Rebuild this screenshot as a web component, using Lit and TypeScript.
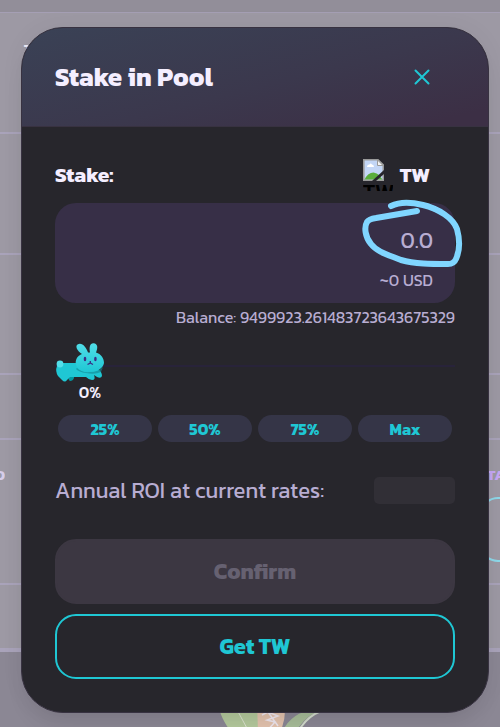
import { LitElement, html, css } from "lit";
import { customElement, state } from "lit/decorators.js";

@customElement("stake-backdrop")
class StakeBackdrop extends LitElement {
  static styles = css`
    :host {
      display: flex;
      flex-direction: column;
      background: #9d99a4;
      color: #d6cdea;
      font: 700 15px/16px Kanit, "Noto Sans", sans-serif;
    }
    .bar { flex: none; height: 12px; background: #928e99; border-bottom: 1px solid #a59fb4; }
    .row { flex: none; box-sizing: border-box; height: 121px; border-bottom: 2px solid #a9a3ba; }
    .first { padding: 28px 0 0 24px; color: #eeeaf4; }
    .third { height: 120px; }
    .short { height: 65px; }
    .panel { height: 145px; display: flex; justify-content: space-between; padding-top: 27px; }
    .left { width: 5px; direction: rtl; white-space: nowrap; overflow: hidden; }
    .right { width: 13px; white-space: nowrap; color: #c6a8f5; overflow: hidden; }
    .pill { width: 80px; height: 61px; margin: 14px 0 0 -7px; border: 2px solid #8ed9ea; border-radius: 18px; }
    .last { height: 67px; border-bottom-width: 4px; }
    .foot { flex: 1; background: #8b8794; padding-left: 218px; }
    .foot svg { display: block; margin-top: 30px; }
  `;
  render() {
    return html`
      <div class="bar"></div>
      <div class="row first">T</div>
      <div class="row"></div>
      <div class="row third"></div>
      <div class="row short"></div>
      <div class="row panel">
        <div class="left">ED</div>
        <div class="right">TAKE<div class="pill"></div></div>
      </div>
      <div class="row last"></div>
      <div class="foot">
        <svg width="110" height="46" viewBox="0 0 110 46" aria-hidden="true">
          <path d="M0 18C1 32 6 40 13 50H42V20Z" fill="#b4c99d" />
          <path d="M17 24L31 50" stroke="#dce3cf" />
          <path d="M39 20H66Q69 36 62 50H40Z" fill="#e3c3ae" />
          <path d="M44 33L50 30 60 34 49 38 57 40 48 50M50 30L60 44" fill="none" stroke="#eee6ee" stroke-width="1.500" />
          <path d="M104 28Q76 26 64 50H78Q86 34 104 28Z" fill="#a8bd99" />
          <path d="M103 29Q88 35 80 50" fill="none" stroke="#d3dccc" stroke-width="2" />
        </svg>
      </div>
    `;
  }
}

@customElement("bunny-slider")
class BunnySlider extends LitElement {
  static styles = css`
    :host { display: block; position: relative; box-sizing: border-box; height: 68px; padding-top: 1px; }
    .track { height: 2px; background: #28233a; margin-top: 25px; }
    .bunny { position: absolute; left: 0; top: 3px; }
    .range { position: absolute; inset: 0; width: 100%; margin: 0; opacity: 0; }
    .value {
      position: absolute;
      left: 0;
      top: 41px;
      width: 70px;
      text-align: center;
      color: #f4eeff;
      font-size: 16px;
      line-height: 24px;
      font-weight: 500;
    }
  `;
  render() {
    return html`
      <div class="track"></div>
      <svg class="bunny" width="50" height="41" viewBox="0 0 50 41" aria-hidden="true">
        <defs>
          <linearGradient id="head" x1="0" y1="0" x2="0" y2="30" gradientUnits="userSpaceOnUse">
            <stop stop-color="#53dee9" />
            <stop offset="1" stop-color="#1fc7d4" />
          </linearGradient>
        </defs>
        <path d="M13 33H19V36Q18 39 15 39 13 38 13 33Z" fill="#0098a1" />
        <path d="M36 27H43Q47 30 47 34 46 37 42 35L39 33Q41 38 37 38 34 38 31 35H15L12 38Q10 41 7 38L3 34Q0 29 2 24 4 21 8 21H36Z" fill="#1fc7d4" />
        <circle cx="5" cy="22" r="3.4" fill="#53dee9" />
        <path d="M22 26Q27 31 35 30 43 30 48 25L46 30Q40 33 31 31Q24 30 21 27Z" fill="#148b96" opacity=".65" />
        <path d="M27 12C22 9 20 4 22.500 2.500 27 0 31 5 33 10.500H35C34 5 35 1 38.5 1.2 43 1.500 43 6 41 10.500 46 12 49 16 49 21 48 27 42 29.500 35 29.500 27 29.500 21 27 20.700 21 20.500 16 24 13 27 12Z" fill="url(#head)" />
        <ellipse cx="30" cy="17" rx="1.3" ry="2.2" fill="#3b2d85" />
        <ellipse cx="40.4" cy="17" rx="1.3" ry="2.2" fill="#3b2d85" />
        <path d="M35.3 19V21L32.5 22.5M35.3 21L38 22.5" fill="none" stroke="#3b2d85" stroke-width="1.3" />
      </svg>
      <input class="range" type="range" min="0" max="100" value="0" aria-label="Stake percentage" />
      <div class="value">0%</div>
    `;
  }
}

@customElement("app-root")
class AppRoot extends LitElement {
  @state() private amount = "";

  static styles = css`
    :host {
      display: block;
      position: relative;
      min-height: 100vh;
      box-sizing: border-box;
      padding: 27px 11px 14px 21px;
      overflow: hidden;
      font-family: Kanit, "Noto Sans", sans-serif;
      font-variant-ligatures: none;
      color: #f4eeff;
    }
    .backdrop { position: absolute; inset: 0; }
    .modal {
      position: relative;
      box-sizing: border-box;
      border: 1px solid #383241;
      border-radius: 42px;
      overflow: hidden;
      background: #27262c;
      box-shadow: 0 16px 24px -8px #00000018, 0 0 24px #0000000c;
    }
    .header {
      display: flex;
      align-items: center;
      justify-content: space-between;
      box-sizing: border-box;
      height: 99px;
      padding: 0 42px 0 33px;
      border-bottom: 1px solid #383241;
      background: linear-gradient(166deg, #3a4155 4%, #3b384d 55%, #3c2f45 92%);
    }
    .title { margin: 0; font-size: 26px; line-height: 32px; font-weight: 700; }
    button { font-family: inherit; font-variant-ligatures: none; cursor: pointer; padding: 0; margin: 0; }
    .close {
      display: grid;
      place-items: center;
      width: 48px;
      height: 48px;
      border: 0;
      background: none;
    }
    .body { padding: 32px 33px 33px; }
    .stake { display: flex; align-items: center; justify-content: space-between; height: 32px; margin-bottom: 12px; }
    .label, .token { font-size: 21px; line-height: 32px; font-weight: 700; }
    .token { display: flex; align-items: center; gap: 7px; padding-right: 25px; }
    .logo {
      width: 30px;
      height: 32px;
      overflow: hidden;
      color: #000;
      font-size: 22px;
      line-height: 24px;
      font-weight: 500;
    }
    .logo svg { display: block; }
    .field {
      position: relative;
      display: flex;
      flex-direction: column;
      box-sizing: border-box;
      height: 100px;
      padding: 20px 22px 8px;
      border-radius: 21px;
      background: #372f47;
      color: #b8add2;
      text-align: right;
    }
    .amount {
      width: 100%;
      height: 36px;
      padding: 0;
      border: 0;
      outline: 0;
      background: none;
      color: inherit;
      text-align: right;
      font: 400 22px/36px Kanit, "Noto Sans", sans-serif;
    }
    .amount::placeholder { color: #b8add2; opacity: 1; }
    .usd { margin-top: 9px; font-size: 16px; line-height: 24px; }
    .scribble { position: absolute; right: -10px; top: -8px; pointer-events: none; }
    .balance { margin-bottom: 8px; color: #b8add2; font-size: 16px; line-height: 28px; text-align: right; }
    .chips { display: grid; grid-template-columns: repeat(4, 1fr); gap: 6px; padding: 0 3px; margin-top: 8px; }
    .chip {
      height: 27px;
      border: 0;
      border-radius: 14px;
      background: #353547;
      color: #1fc7d4;
      font-size: 16px;
      line-height: 24px;
      font-weight: 700;
    }
    .roi {
      display: flex;
      align-items: center;
      justify-content: space-between;
      margin: 35px 0;
      color: #b8add2;
      font-size: 22px;
      line-height: 27px;
      white-space: nowrap;
    }
    .skeleton { width: 81px; height: 27px; border-radius: 5px; background: #312f36; }
    .action {
      display: block;
      width: 100%;
      box-sizing: border-box;
      height: 65px;
      border: 2px solid #1fc7d4;
      border-radius: 21px;
      background: none;
      color: #1fc7d4;
      font-size: 22px;
      line-height: 32px;
      font-weight: 700;
    }
    .action:disabled { margin-bottom: 10px; border-color: #3c3742; background: #3c3742; color: #666171; }
  `;

  render() {
    return html`
      <stake-backdrop class="backdrop"></stake-backdrop>
      <section class="modal" role="dialog" aria-labelledby="title">
        <header class="header">
          <h1 class="title" id="title">Stake in Pool</h1>
          <button class="close" aria-label="Close">
            <svg width="16" height="16" viewBox="0 0 16 16" fill="none" stroke="#1fc7d4" stroke-width="2" stroke-linecap="round">
              <path d="M1.5 1.5L14.5 14.5M14.5 1.5L1.5 14.5" />
            </svg>
          </button>
        </header>
        <div class="body">
          <div class="stake">
            <label class="label" for="amount">Stake:</label>
            <div class="token">
              <div class="logo">
                <svg width="21" height="22" viewBox="0 0 21 22" aria-hidden="true">
                  <path d="M.8.8H15L20.3 6V21.2H.8Z" fill="#c3d6f6" stroke="#9a9a9a" stroke-width="1.6" />
                  <path d="M4 8Q4 5.500 6.500 5.500 7.500 3.500 9 5.500 11 5.500 11 8Z" fill="#fff" />
                  <path d="M1.600 20.400Q5 13.500 10.500 13.500 14 14 16 16L19.500 20.400Z" fill="#5aad3c" />
                  <path d="M14.500 1V6.500H20Z" fill="#f4f4f4" stroke="#9a9a9a" />
                  <path d="M21 11V15L13 22H9Z" fill="#27262c" />
                </svg>
                TW
              </div>
              <span>TW</span>
            </div>
          </div>
          <div class="field">
            <input
              class="amount"
              id="amount"
              type="text"
              inputmode="decimal"
              placeholder="0.0"
              .value=${this.amount}
              @input=${(e: Event) => (this.amount = (e.target as HTMLInputElement).value)}
            />
            <div class="usd">~0 USD</div>
            <svg class="scribble" width="108" height="76" viewBox="0 0 108 76" aria-hidden="true">
              <path
                d="M34 11C42 7 54 7 66 10C82 14 96 23 100 34C103 45 103 55 99 64Q97 69 91 69C74 69 58 69 44 65C32 60 20 57 14 49C8 42 7 32 10 27Q12 24 19 23L60 16"
                fill="none"
                stroke="#80d6ff"
                stroke-width="6"
                stroke-linecap="round"
                stroke-linejoin="round"
              />
            </svg>
          </div>
          <div class="balance">Balance: 9499923.261483723643675329</div>
          <bunny-slider></bunny-slider>
          <div class="chips">
            ${["25%", "50%", "75%", "Max"].map((t) => html`<button class="chip">${t}</button>`)}
          </div>
          <div class="roi">
            <span>Annual ROI at current rates:</span>
            <div class="skeleton"></div>
          </div>
          <button class="action" disabled>Confirm</button>
          <button class="action">Get TW</button>
        </div>
      </section>
    `;
  }
}
